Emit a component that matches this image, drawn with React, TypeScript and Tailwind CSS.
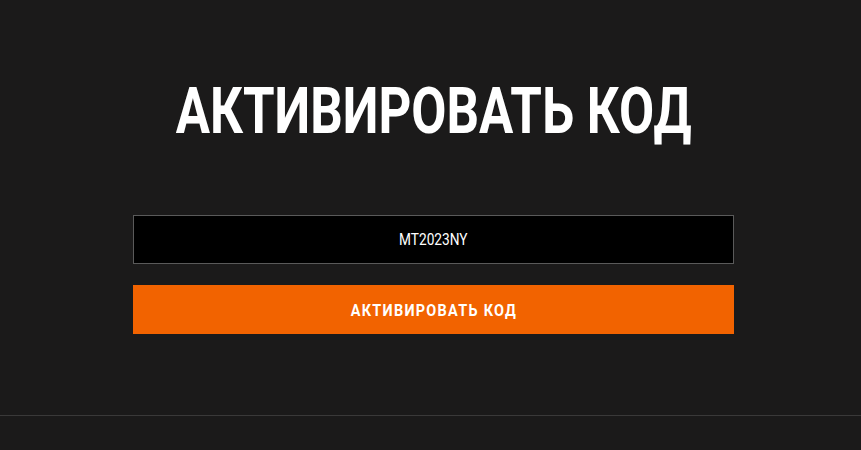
import { useState } from "react";

const font = { fontFamily: 'Roboto, "Liberation Sans", sans-serif' };

export default function App() {
  const [code] = useState("MT2023NY");

  return (
    <div style={font} className="min-h-[450px] w-full bg-[#1b1a1a] flex flex-col">
      <div className="flex flex-col items-center pl-[6px] pt-[80px] h-[415px]">
        {/* condensed headline: Roboto squeezed horizontally */}
        <h1 className="h-[62px] flex items-center justify-center">
          <span className="inline-block scale-x-[0.785] text-[65px] leading-none font-bold text-white whitespace-nowrap">
            АКТИВИРОВАТЬ КОД
          </span>
        </h1>

        <div className="w-[601px] mt-[73px] flex flex-col gap-[21px]">
          <div className="h-[49px] w-full bg-black border border-[#5a5a5a] flex items-center justify-center pt-[1px]">
            <span className="inline-block scale-x-[0.83] text-[16.5px] text-white">{code}</span>
          </div>
          <button className="h-[49px] w-full bg-[#f26300] flex items-center justify-center pt-[3px]">
            <span className="inline-block scale-x-[0.85] text-white font-bold text-[17px] tracking-[1.5px] whitespace-nowrap">
              АКТИВИРОВАТЬ КОД
            </span>
          </button>
        </div>
      </div>
      <div className="border-t border-[#3a3939] flex-1" />
    </div>
  );
}
